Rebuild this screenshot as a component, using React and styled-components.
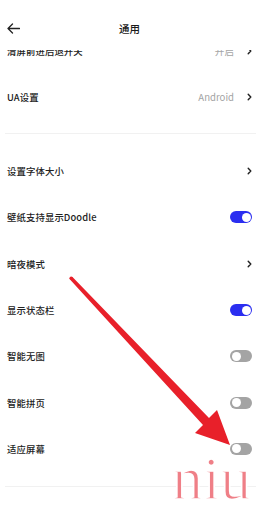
import React from 'react';
import styled, { createGlobalStyle } from 'styled-components';

const Global = createGlobalStyle`
  html, body { margin: 0; padding: 0; background: #fff; }
  body { font-family: "Noto Sans CJK SC", "Noto Sans", sans-serif; }
`;

const Page = styled.div`
  position: relative;
  width: 264px;
  height: 512px;
  overflow: hidden;
  background: #fff;
`;

const Header = styled.div`
  position: relative;
  z-index: 1;
  height: 50px;
  box-sizing: border-box;
  padding: 6px 0 0 7px;
  display: grid;
  grid-template-columns: 1fr auto 1fr;
  align-items: center;
  background: #fff;
`;

const Title = styled.div`
  font-size: 10.5px;
  font-weight: 500;
  color: #1a1a1a;
  margin-right: 12px;
`;

const List = styled.div`
  margin-top: -22px;
`;

const Section = styled.div`
  display: flex;
  flex-direction: column;
`;

const Divider = styled.div`
  height: 1px;
  background: #f1f1f1;
  margin: ${p => p.$top}px 8px ${p => p.$bottom}px 5px;
`;

const Row = styled.div`
  height: ${p => p.$h || 46.3}px;
  display: flex;
  align-items: center;
  padding: 0 12px 0 7px;
`;

const Label = styled.div`
  flex: 1;
  font-size: 9.4px;
  font-weight: 500;
  color: #222;
  letter-spacing: 0.1px;
`;

const Value = styled.div`
  font-size: 9.6px;
  color: #a4a4a4;
  margin-right: 13px;
`;

const Track = styled.div`
  width: 22px;
  height: 12px;
  border-radius: 6px;
  box-sizing: border-box;
  padding: 1.5px;
  display: flex;
  justify-content: ${p => (p.$on ? 'flex-end' : 'flex-start')};
  background: ${p => (p.$on ? '#2b2ef0' : '#a4a4a4')};
`;

const Knob = styled.div`
  width: 9px;
  height: 9px;
  border-radius: 50%;
  background: #fff;
`;

const Watermark = styled.div`
  position: absolute;
  left: 172px;
  top: 447px;
  font-family: "Liberation Serif", serif;
  font-size: 62px;
  line-height: 1;
  color: #ef7f87;
  -webkit-text-stroke: 1.6px #fff;
  pointer-events: none;
`;

const Overlay = styled.svg`
  position: absolute;
  left: 0;
  top: 0;
  pointer-events: none;
`;

const Chevron = () => (
  <svg width="5" height="8" viewBox="0 0 5 8">
    <path d="M1.2 1.2 L3.8 4 L1.2 6.8" fill="none" stroke="#222" strokeWidth="1.4" strokeLinecap="round" strokeLinejoin="round" />
  </svg>
);

const Toggle = ({ on }) => (
  <Track $on={on}>
    <Knob />
  </Track>
);

const BackArrow = () => (
  <svg width="13" height="11" viewBox="0 0 13 11">
    <path d="M12.5 5.5 H1 M5.5 1 L1 5.5 L5.5 10" fill="none" stroke="#222" strokeWidth="1.3" strokeLinecap="round" strokeLinejoin="round" />
  </svg>
);

const rows = [
  { label: '设置字体大小', chevron: true },
  { label: '壁纸支持显示Doodle', toggle: true, on: true },
  { label: '暗夜模式', chevron: true },
  { label: '显示状态栏', toggle: true, on: true },
  { label: '智能无图', toggle: true, on: false },
  { label: '智能拼页', toggle: true, on: false },
  { label: '适应屏幕', toggle: true, on: false },
];

export default function App() {
  return (
    <Page>
      <Global />
      <Header>
        <BackArrow />
        <Title>通用</Title>
        <div />
      </Header>
      <List>
        <Section>
          <Row $h={46}>
            <Label>清屏前进后退开关</Label>
            <Value>开启</Value>
            <Chevron />
          </Row>
          <Row $h={46}>
            <Label>UA设置</Label>
            <Value>Android</Value>
            <Chevron />
          </Row>
        </Section>
        <Divider $top={13} $bottom={14} />
        <Section>
          {rows.map(r => (
            <Row key={r.label}>
              <Label>{r.label}</Label>
              {r.chevron && <Chevron />}
              {r.toggle && <Toggle on={r.on} />}
            </Row>
          ))}
        </Section>
        <Divider $top={14} $bottom={0} />
      </List>
      <Overlay width="264" height="512" viewBox="0 0 264 512">
        <polygon
          points="72.5,277 209,418 217,410 230,445 195,433 203,425 70,279.5"
          fill="#e8202a"
          strokeLinejoin="round"
        />
        <circle cx="71.2" cy="278.2" r="1.8" fill="#e8202a" />
      </Overlay>
      <Watermark>niu</Watermark>
    </Page>
  );
}
